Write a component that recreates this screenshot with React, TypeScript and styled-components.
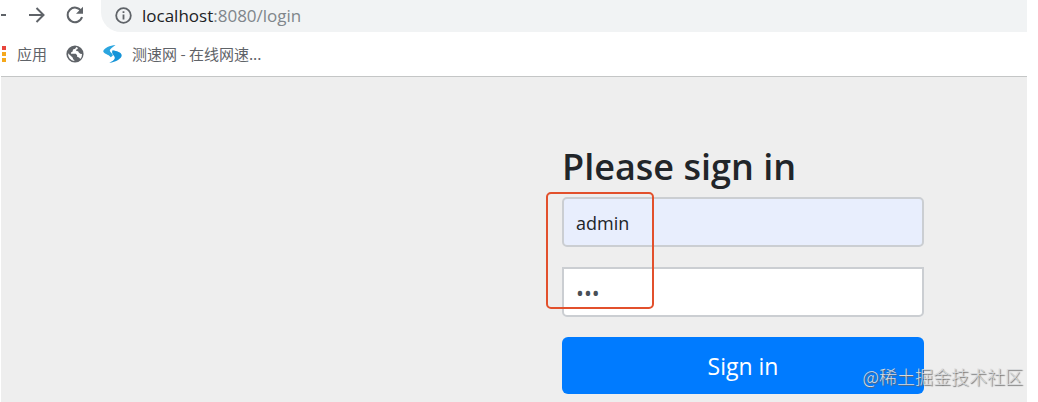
import React from 'react';
import styled, { createGlobalStyle } from 'styled-components';

const GlobalStyle = createGlobalStyle`
  *, *::before, *::after { box-sizing: border-box; }
  html, body { margin: 0; background: #fff; overflow: hidden; }
  body { font-family: "Open Sans", "Noto Sans CJK SC", sans-serif; }
`;

const Browser = styled.div`
  display: flex;
  flex-direction: column;
  min-height: 100vh;
  margin: 0 11px 0 1px;
`;

const Toolbar = styled.nav`
  display: flex;
  align-items: center;
  height: 32px;
`;

const NavButtons = styled.div`
  display: flex;
  gap: 21px;
  padding: 0 17px 2px 0;
`;

const IconButton = styled.button`
  display: flex;
  align-items: center;
  justify-content: center;
  height: 30px;
  padding: 0;
  border: 0;
  background: none;
  color: #5f6368;
`;

const AddressBar = styled.div`
  flex: 1;
  display: flex;
  align-items: center;
  gap: 10px;
  height: 32px;
  padding: 0 14px 2px;
  border-radius: 0 0 0 20px;
  background: #f1f3f4;
  color: #80868b;
  font-size: 17px;
`;

const Host = styled.span`
  color: #202124;
`;

const Bookmarks = styled.nav`
  display: flex;
  align-items: center;
  gap: 19px;
  height: 45px;
  border-bottom: 1px solid #c4c6c6;
`;

const Bookmark = styled.a`
  display: flex;
  align-items: center;
  gap: 10px;
  color: #5f6368;
  font-family: "Noto Sans CJK SC", sans-serif;
  font-size: 15px;
  line-height: 20px;
  text-decoration: none;
  white-space: nowrap;
`;

const Page = styled.main`
  position: relative;
  flex: 1;
  display: flex;
  justify-content: flex-end;
  padding: 64px 103px 8px 0;
  background: #eee;
`;

const Form = styled.form`
  position: relative;
  display: flex;
  flex-direction: column;
  width: 362px;
`;

const Title = styled.h1`
  margin: 0 0 4px;
  color: #212529;
  font-size: 36px;
  font-weight: 600;
  line-height: 52px;
  white-space: nowrap;
`;

const Field = styled.input<{ $filled?: boolean }>`
  width: 100%;
  height: 50px;
  margin-bottom: 20px;
  padding: 2px 12px 0;
  border: 2px solid #cbced2;
  border-radius: ${p => (p.$filled ? '5px' : '0 0 5px 5px')};
  outline: 0;
  background: ${p => (p.$filled ? '#e8eefd' : '#fff')};
  color: ${p => (p.$filled ? '#212529' : '#495057')};
  font-family: "Open Sans", sans-serif;
  font-size: ${p => (p.$filled ? '18px' : '21px')};
`;

const Submit = styled.button`
  height: 57px;
  padding: 0;
  border: 0;
  border-radius: 6px;
  background: #007bff;
  color: #fff;
  font-family: "Open Sans", sans-serif;
  font-size: 23px;
`;

const Highlight = styled.div`
  position: absolute;
  top: 51px;
  left: -16px;
  width: 108px;
  height: 117px;
  border: 2px solid #e2502c;
  border-radius: 5px;
  pointer-events: none;
`;

const Watermark = styled.span`
  position: absolute;
  right: 4px;
  bottom: 13px;
  color: #d8dadc;
  font-family: "Noto Sans CJK SC", sans-serif;
  font-size: 18px;
  font-weight: 300;
  line-height: 26px;
  text-shadow: 1px 1px 1px #666;
  white-space: nowrap;
`;

const BackIcon = () => (
  <svg width="5" height="18" viewBox="0 0 5 18" aria-hidden="true">
    <path d="M0 9h5" stroke="currentColor" strokeWidth="2" />
  </svg>
);

const ForwardIcon = () => (
  <svg width="18" height="18" viewBox="0 0 18 18" fill="none" stroke="currentColor" strokeWidth="2" aria-hidden="true">
    <path d="M2 9h14.500M9.500 2l7 7-7 7" />
  </svg>
);

const ReloadIcon = () => (
  <svg width="18" height="18" viewBox="0 0 18 18" aria-hidden="true">
    <path d="M15.3 5.2A7.3 7.3 0 1 0 16 11" fill="none" stroke="currentColor" strokeWidth="2" />
    <path d="M17 .8v7h-7z" fill="currentColor" />
  </svg>
);

const InfoIcon = () => (
  <svg width="17" height="17" viewBox="0 0 17 17" aria-hidden="true">
    <circle cx="8.5" cy="8.5" r="7.3" fill="none" stroke="#5f6368" strokeWidth="1.8" />
    <path d="M7.6 7.5h1.8v5H7.6zM7.6 4.3h1.8v1.8H7.6z" fill="#5f6368" />
  </svg>
);

const AppsIcon = () => (
  <svg width="6" height="18" viewBox="0 0 6 18" aria-hidden="true">
    <path d="M1 1h4v4H1z" fill="#e8453c" />
    <path d="M1 7h4v4H1zM1 13h4v4H1z" fill="#f5a81c" />
  </svg>
);

const GlobeIcon = () => (
  <svg width="18" height="18" viewBox="0 0 18 18" aria-hidden="true">
    <circle cx="9" cy="9" r="8.6" fill="#5f6368" />
    <path d="M10.3 2.1 9.2 3.8 7 4.6 6.6 6.4 5 7.6v1.2h4.8l1.3 1.5v1.5l1.9.7 1.3 1.6A7 7 0 0 0 16 9l-1.8-.2-1.6-1.5-.4-1.1-1.9-.3-.2-1.2 1.6-.6V2.700zM2.100 8.300l4.700 4.400.3 1.500 1.200.7v1.100A7 7 0 0 1 2.100 8.300z" fill="#fff" />
  </svg>
);

const SpeedIcon = () => (
  <svg width="19" height="18" viewBox="0 0 19 18" aria-hidden="true">
    <path d="M12.500 0C7 .4 1 3.200.3 6c-.5 2.800 5.200 3.200 7.500 6.200l2.100-1.600C9.600 8 6.300 7 6.900 5.100 7.400 3.400 9.900 2.100 12.500 0z" fill="#2ba5df" />
    <path d="M9.600 5.200c4 .6 9 2.200 9.100 5 .1 3.200-5.600 6.800-12.400 7.800 3.300-1.800 6-3.700 5.400-5.700C11.200 10.300 7.800 8.200 9.600 5.200z" fill="#1694d8" />
  </svg>
);

export default function App() {
  return (
    <Browser>
      <GlobalStyle />
      <Toolbar aria-label="Navigation">
        <NavButtons>
          <IconButton aria-label="Back"><BackIcon /></IconButton>
          <IconButton aria-label="Forward"><ForwardIcon /></IconButton>
          <IconButton aria-label="Reload"><ReloadIcon /></IconButton>
        </NavButtons>
        <AddressBar>
          <InfoIcon />
          <span><Host>localhost</Host>:8080/login</span>
        </AddressBar>
      </Toolbar>
      <Bookmarks aria-label="Bookmarks">
        <Bookmark href="#apps"><AppsIcon />应用</Bookmark>
        <Bookmark href="#web" aria-label="Web"><GlobeIcon /></Bookmark>
        <Bookmark href="#speed"><SpeedIcon />测速网 - 在线网速...</Bookmark>
      </Bookmarks>
      <Page>
        <Form onSubmit={e => e.preventDefault()}>
          <Title>Please sign in</Title>
          <Field $filled type="text" aria-label="Username" defaultValue="admin" />
          <Field type="password" aria-label="Password" defaultValue="123" />
          <Submit type="submit">Sign in</Submit>
          <Highlight />
        </Form>
        <Watermark>@稀土掘金技术社区</Watermark>
      </Page>
    </Browser>
  );
}
